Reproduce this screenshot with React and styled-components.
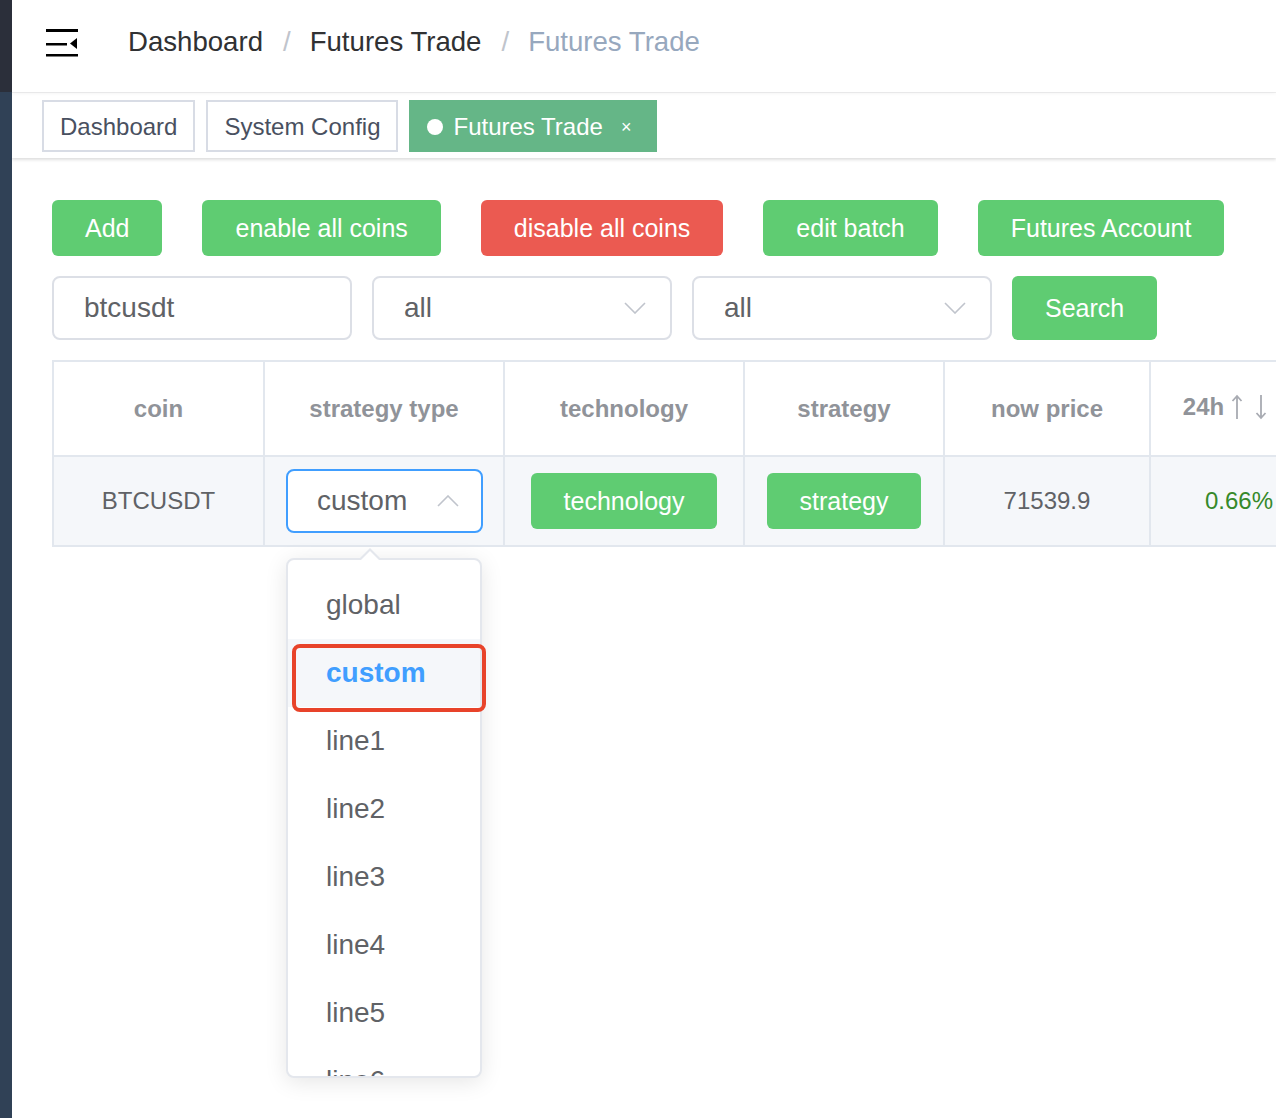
import styled, { createGlobalStyle } from 'styled-components';

const GlobalStyle = createGlobalStyle`
  body {
    margin: 0;
    font-family: "Liberation Sans", Arial, Helvetica, sans-serif;
    background: #fff;
  }
  * { box-sizing: border-box; }
`;

const Layout = styled.div`
  display: flex;
  min-height: 1118px;
  overflow: hidden;
`;

const Sidebar = styled.aside`
  width: 12px;
  flex-shrink: 0;
  display: flex;
  flex-direction: column;
  background: #304156;
`;

const SidebarLogo = styled.div`
  height: 92px;
  background: #2b2f3a;
`;

const Main = styled.div`
  flex: 1;
  min-width: 0;
  overflow: hidden;
  position: relative;
`;

const Navbar = styled.div`
  height: 92px;
  display: flex;
  align-items: center;
  padding: 0 0 8px 34px;
  background: #fff;
  box-shadow: 0 1px 4px rgba(0, 21, 41, 0.06);
  position: relative;
  z-index: 2;
`;

const Hamburger = styled.svg`
  width: 32px;
  height: 28px;
  margin-top: 2px;
`;

const Breadcrumb = styled.nav`
  display: flex;
  align-items: center;
  margin-left: 50px;
  font-size: 27.6px;
  color: #303133;
`;

const Crumb = styled.span`
  color: ${({ $last }) => ($last ? '#97a8be' : '#303133')};
`;

const Separator = styled.span`
  margin: 0 19px 0 20px;
  color: #c0c4cc;
`;

const TagsBar = styled.div`
  height: 66px;
  display: flex;
  align-items: flex-start;
  gap: 11px;
  padding: 7px 0 0 30px;
  background: #fff;
  border-top: 1px solid #f0f0f0;
  box-shadow: 0 2px 3px rgba(0, 0, 0, 0.12), 0 0 3px rgba(0, 0, 0, 0.04);
  position: relative;
  z-index: 1;
`;

const Tag = styled.div`
  height: 52px;
  display: flex;
  align-items: center;
  padding: 2px 16px 0;
  font-size: 24px;
  color: ${({ $active }) => ($active ? '#fff' : '#495060')};
  background: ${({ $active }) => ($active ? '#65b687' : '#fff')};
  border: 2px solid ${({ $active }) => ($active ? '#65b687' : '#d8dce5')};
`;

const TagDot = styled.span`
  width: 16px;
  height: 16px;
  border-radius: 50%;
  background: #fff;
  margin-right: 10px;
`;

const TagClose = styled.span`
  font-size: 18px;
  margin-left: 18px;
  margin-right: 8px;
`;

const Content = styled.div`
  padding: 42px 0 0 40px;
`;

const ButtonRow = styled.div`
  display: flex;
  gap: 40px;
`;

const Button = styled.button`
  height: ${({ $tall }) => ($tall ? '64px' : '56px')};
  padding: 0 33px;
  border: none;
  border-radius: 6px;
  font-family: inherit;
  font-size: 25px;
  color: #fff;
  background: ${({ $danger }) => ($danger ? '#eb5a51' : '#5fcc72')};
`;

const FilterRow = styled.div`
  display: flex;
  gap: 20px;
  margin-top: 20px;
`;

const Field = styled.div`
  width: 300px;
  height: 64px;
  display: flex;
  align-items: center;
  justify-content: space-between;
  padding: 0 24px 0 30px;
  border: 2px solid #dcdfe6;
  border-radius: 8px;
  font-size: 28px;
  color: #606266;
`;

const TableWrap = styled.div`
  margin-top: 20px;
`;

const Table = styled.table`
  border-collapse: collapse;
  table-layout: fixed;
  width: 1480px;
`;

const Th = styled.th`
  height: 95px;
  border: 2px solid #e2e7ee;
  font-size: 24px;
  font-weight: bold;
  color: #909399;
  text-align: center;
  background: #fff;
`;

const Td = styled.td`
  height: 90px;
  border: 2px solid #e2e7ee;
  font-size: 24px;
  color: ${({ $color }) => $color || '#606266'};
  text-align: center;
  background: #f5f7fa;
  vertical-align: middle;
`;

const SortHead = styled.div`
  display: flex;
  align-items: center;
  justify-content: center;
  gap: 7px;
  margin: -4px 0 0 -26px;
`;

const SortArrows = styled.svg`
  width: 38px;
  height: 26px;
`;

const CellSelect = styled.div`
  position: relative;
  width: 197px;
  height: 64px;
  margin-left: 20px;
  display: flex;
  align-items: center;
  justify-content: space-between;
  padding: 0 22px 0 29px;
  background: #fff;
  border: 2px solid #409eff;
  border-radius: 8px;
  font-size: 28px;
  color: #606266;
  text-align: left;
`;

const Dropdown = styled.div`
  position: absolute;
  top: 87px;
  left: -2px;
  width: 196px;
  height: 520px;
  background: #fff;
  border: 2px solid #e4e7ed;
  border-radius: 8px;
  box-shadow: 0 4px 22px rgba(0, 0, 0, 0.1);
  z-index: 5;

  &::before {
    content: '';
    position: absolute;
    top: -12px;
    left: 70px;
    border-left: 12px solid transparent;
    border-right: 12px solid transparent;
    border-bottom: 12px solid #e4e7ed;
  }

  &::after {
    content: '';
    position: absolute;
    top: -9px;
    left: 72px;
    border-left: 10px solid transparent;
    border-right: 10px solid transparent;
    border-bottom: 10px solid #fff;
  }
`;

const OptionList = styled.ul`
  list-style: none;
  margin: 0;
  padding: 11px 0 0;
  height: 100%;
  overflow: hidden;
  border-radius: 8px;
`;

const Option = styled.li`
  height: 68px;
  line-height: 68px;
  padding-left: 38px;
  font-size: 28px;
  font-weight: ${({ $selected }) => ($selected ? 'bold' : 'normal')};
  color: ${({ $selected }) => ($selected ? '#409eff' : '#606266')};
  background: ${({ $selected }) => ($selected ? '#f5f7fa' : '#fff')};
`;

const Highlight = styled.div`
  position: absolute;
  left: 4px;
  top: 84px;
  width: 194px;
  height: 68px;
  border: 4px solid #e8432a;
  border-radius: 8px;
  pointer-events: none;
`;

const Chevron = ({ up }) => (
  <svg width="22" height="12" viewBox="0 0 22 12">
    <polyline
      points={up ? '1,11 11,1 21,11' : '1,1 11,11 21,1'}
      fill="none"
      stroke="#c0c4cc"
      strokeWidth="1.6"
    />
  </svg>
);

const columns = [211, 240, 240, 200, 206, 178, 205];
const options = ['global', 'custom', 'line1', 'line2', 'line3', 'line4', 'line5', 'line6'];

export default function App() {
  return (
    <>
      <GlobalStyle />
      <Layout>
        <Sidebar>
          <SidebarLogo />
        </Sidebar>
        <Main>
          <Navbar>
            <Hamburger viewBox="0 0 32 28">
              <rect x="0" y="0" width="32" height="3" fill="#000" />
              <rect x="0" y="14" width="21" height="2.5" fill="#000" />
              <polygon points="31,9 24,14.5 31,20" fill="#000" />
              <rect x="0" y="25" width="32" height="2.5" fill="#000" />
            </Hamburger>
            <Breadcrumb>
              <Crumb>Dashboard</Crumb>
              <Separator>/</Separator>
              <Crumb>Futures Trade</Crumb>
              <Separator>/</Separator>
              <Crumb $last>Futures Trade</Crumb>
            </Breadcrumb>
          </Navbar>
          <TagsBar>
            <Tag>Dashboard</Tag>
            <Tag>System Config</Tag>
            <Tag $active>
              <TagDot />
              Futures Trade
              <TagClose>×</TagClose>
            </Tag>
          </TagsBar>
          <Content>
            <ButtonRow>
              <Button>Add</Button>
              <Button>enable all coins</Button>
              <Button $danger>disable all coins</Button>
              <Button>edit batch</Button>
              <Button>Futures Account</Button>
            </ButtonRow>
            <FilterRow>
              <Field>btcusdt</Field>
              <Field>
                all
                <Chevron />
              </Field>
              <Field>
                all
                <Chevron />
              </Field>
              <Button $tall>Search</Button>
            </FilterRow>
            <TableWrap>
              <Table>
                <colgroup>
                  {columns.map((w, i) => (
                    <col key={i} style={{ width: w }} />
                  ))}
                </colgroup>
                <thead>
                  <tr>
                    <Th>coin</Th>
                    <Th>strategy type</Th>
                    <Th>technology</Th>
                    <Th>strategy</Th>
                    <Th>now price</Th>
                    <Th>
                      <SortHead>
                        24h
                        <SortArrows viewBox="0 0 38 26">
                          <g fill="none" stroke="#a8abb2" strokeWidth="1.8">
                            <path d="M6 25 V2 M1.5 7 L6 2 L10.5 7" />
                            <path d="M30 1 V24 M25.5 19 L30 24 L34.5 19" />
                          </g>
                        </SortArrows>
                      </SortHead>
                    </Th>
                    <Th>status</Th>
                  </tr>
                </thead>
                <tbody>
                  <tr>
                    <Td>BTCUSDT</Td>
                    <Td>
                      <CellSelect>
                        custom
                        <Chevron up />
                        <Dropdown>
                          <OptionList>
                            {options.map((o) => (
                              <Option key={o} $selected={o === 'custom'}>
                                {o}
                              </Option>
                            ))}
                          </OptionList>
                          <Highlight />
                        </Dropdown>
                      </CellSelect>
                    </Td>
                    <Td>
                      <Button>technology</Button>
                    </Td>
                    <Td>
                      <Button>strategy</Button>
                    </Td>
                    <Td>71539.9</Td>
                    <Td $color="#36892a">0.66%</Td>
                    <Td />
                  </tr>
                </tbody>
              </Table>
            </TableWrap>
          </Content>
        </Main>
      </Layout>
    </>
  );
}
